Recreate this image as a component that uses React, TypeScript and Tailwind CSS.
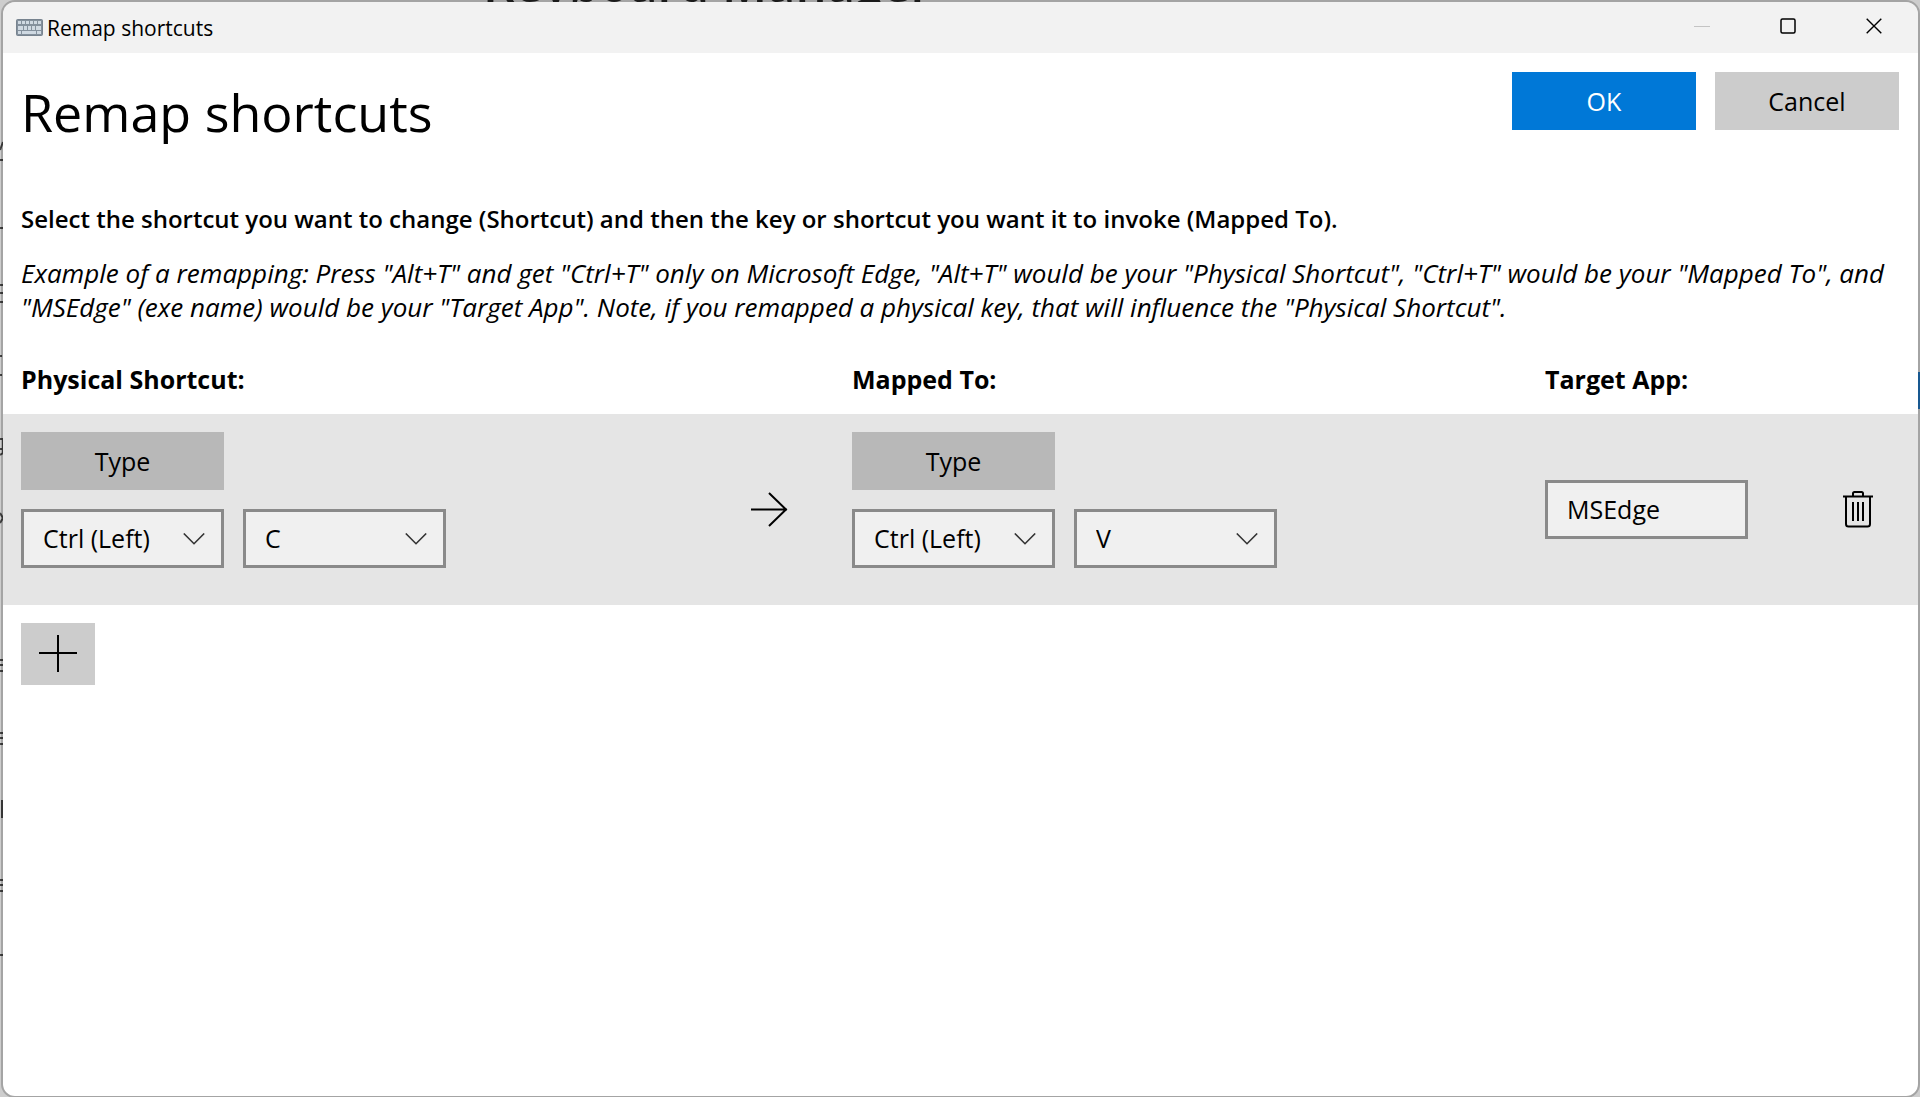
import { useState } from "react";
import type { ReactNode } from "react";

const keyOptions = ["Ctrl (Left)", "Alt (Left)", "Shift (Left)", "Win (Left)", "C", "V", "T"];

const controlBorder = "h-[59px] border-[3px] border-[#8a8a8a] bg-[#f0f0f0] pb-0.5";
const columns = "grid grid-cols-[730fr_101fr_693fr_203fr_152fr] px-[18px]";

// The settings window that peeks out behind this one
function Backdrop() {
  return (
    <div aria-hidden className="absolute inset-0 overflow-hidden">
      <div className="flex h-2 items-end pl-[483px] text-[49px] leading-none font-semibold text-[#222]">
        Keyboard Manager
      </div>
      <svg
        className="absolute top-0 left-0"
        width="3"
        height="1000"
        viewBox="0 0 3 1000"
        fill="none"
        stroke="#444"
        strokeWidth="2"
      >
        <path d="M0 150 3 142M0 160h3M0 228h3M0 285h3M0 293h3M0 302h3M0 356h2M0 375h2" />
        <path d="M0 439h3v14l-3 2M0 449h3M0 513l3 5-3 5M0 660h3M0 665h3M0 671h3M0 733h3M0 738h3M0 744h3" />
        <path d="M2 800v18M0 880h3M0 885h3M0 891h3M0 955h3" />
      </svg>
      <div className="absolute top-[372px] right-0 h-[37px] w-[2px] bg-[#1f6fb5]" />
    </div>
  );
}

function KeyboardIcon() {
  return (
    <svg width="27" height="18" viewBox="0 0 27 18" aria-hidden>
      <rect x="0.5" y="0.5" width="26" height="16" rx="1" fill="#84919d" stroke="#77838f" />
      <g fill="#cfd9e2">
        <path d="M2 2h3v3H2zM6 2h3v3H6zM10 2h3v3h-3zM14 2h3v3h-3zM18 2h3v3h-3zM22 2h3v3h-3z" />
        <path d="M2 7h5v4H2zM8 7h3v4H8zM12 7h3v4h-3zM16 7h3v4h-3zM20 7h5v4h-5z" />
        <path d="M2 12h3v3H2zM6 12h14v3H6zM21 12h4v3h-4z" />
      </g>
    </svg>
  );
}

function KeySelect({ label, initial }: { label: string; initial: string }) {
  const [value, setValue] = useState(initial);

  return (
    <div className="relative w-[203px]">
      <select
        aria-label={label}
        value={value}
        onChange={(event) => setValue(event.target.value)}
        className={`${controlBorder} w-full appearance-none pr-12 pl-[19px] text-[25px] leading-8`}
      >
        {keyOptions.map((key) => (
          <option key={key}>{key}</option>
        ))}
      </select>
      <svg
        className="pointer-events-none absolute top-6 right-[19px]"
        width="22"
        height="13"
        viewBox="0 0 22 13"
        fill="none"
        stroke="#333"
        strokeWidth="1.6"
        aria-hidden
      >
        <path d="M.8 .5 11 10.700 21.200 .5" />
      </svg>
    </div>
  );
}

function ShortcutEditor({ name, keys }: { name: string; keys: string[] }) {
  return (
    <div className="flex flex-col items-start gap-[19px] pt-[18px] pb-[37px]">
      <button type="button" className="h-[58px] w-[203px] bg-[#b8b8b8] text-[25px] leading-8">
        Type
      </button>
      <div className="flex gap-[19px]">
        {keys.map((key, index) => (
          <KeySelect key={index} label={`${name} key ${index + 1}`} initial={key} />
        ))}
      </div>
    </div>
  );
}

function CaptionButton({ label, children }: { label: string; children: ReactNode }) {
  return (
    <button type="button" aria-label={label} className="flex h-12 w-[86px] items-center justify-center">
      <svg width="16" height="16" viewBox="0 0 16 16" fill="none" stroke="currentColor" aria-hidden>
        {children}
      </svg>
    </button>
  );
}

export default function App() {
  const [targetApp, setTargetApp] = useState("MSEdge");

  return (
    <div className="relative flex min-h-screen flex-col overflow-hidden bg-[#cdcdcd] pt-[2px] pr-[2px] pb-px pl-[3px] font-['Open_Sans','Noto_Sans',sans-serif] text-black">
      <Backdrop />
      <div className="relative flex flex-1 flex-col overflow-hidden rounded-xl bg-white outline-2 outline-black/20">
        <header className="flex h-[51px] items-start justify-between bg-[#f2f2f2]">
          <div className="flex h-full items-center gap-1 pl-[13px]">
            <KeyboardIcon />
            <span className="text-[21px] leading-7">Remap shortcuts</span>
          </div>
          <div className="flex pr-px">
            <CaptionButton label="Minimize">
              <path d="M0 8.500h16" stroke="#c4c4c4" />
            </CaptionButton>
            <CaptionButton label="Maximize">
              <rect x="1" y="1" width="14" height="14" rx="1.5" strokeWidth="1.5" />
            </CaptionButton>
            <CaptionButton label="Close">
              <path d="m.7.7 14.600 14.600M15.300.7.7 15.300" strokeWidth="1.4" />
            </CaptionButton>
          </div>
        </header>

        <main className="flex flex-col">
          <div className="flex items-start justify-between pt-[19px] pr-[19px] pl-[18px]">
            <h1 className="text-[52px] leading-[80px]">Remap shortcuts</h1>
            <div className="flex gap-[19px]">
              <button type="button" className="h-[58px] w-[184px] bg-[#0078d7] text-[25px] leading-8 text-white">
                OK
              </button>
              <button type="button" className="h-[58px] w-[184px] bg-[#ccc] text-[25px] leading-8">
                Cancel
              </button>
            </div>
          </div>

          <div className="px-[18px] pt-[50px]">
            <p className="text-[24px] leading-[34px] font-semibold">
              Select the shortcut you want to change (Shortcut) and then the key or shortcut you want it to invoke
              (Mapped To).
            </p>
            <p className="pt-5 text-[26px] leading-[34px] italic">
              Example of a remapping: Press "Alt+T" and get "Ctrl+T" only on Microsoft Edge, "Alt+T" would be your
              "Physical Shortcut", "Ctrl+T" would be your "Mapped To", and "MSEdge" (exe name) would be your "Target
              App". Note, if you remapped a physical key, that will influence the "Physical Shortcut".
            </p>
          </div>

          <div className={`${columns} pt-[38px] pb-[18px] text-[25px] leading-[34px] font-bold`}>
            <h2 className="col-span-2">Physical Shortcut:</h2>
            <h2>Mapped To:</h2>
            <h2 className="col-span-2">Target App:</h2>
          </div>

          <div className={`${columns} items-center bg-[#e5e5e5]`}>
            <ShortcutEditor name="Physical shortcut" keys={["Ctrl (Left)", "C"]} />
            <svg width="38" height="36" viewBox="0 0 38 36" fill="none" stroke="currentColor" strokeWidth="2" aria-hidden>
              <path d="M0 17.500h36M18 1 35 17.500 18 34" />
            </svg>
            <ShortcutEditor name="Mapped to" keys={["Ctrl (Left)", "V"]} />
            <input
              aria-label="Target app"
              value={targetApp}
              onChange={(event) => setTargetApp(event.target.value)}
              className={`${controlBorder} w-[203px] px-[19px] text-[25px] leading-8`}
            />
            <button type="button" aria-label="Delete" className="mr-[11px] justify-self-end p-4">
              <svg width="30" height="38" viewBox="0 0 30 38" fill="none" stroke="currentColor" strokeWidth="2" aria-hidden>
                <path d="M0 5.500h30M10 5V2.500Q10 1 11.500 1h7Q20 1 20 2.500V5M3 5.500V33Q3 35.500 5.500 35.500h19Q27 35.500 27 33V5.500" />
                <path d="M10 11v19M15 11v19M20 11v19" />
              </svg>
            </button>
          </div>

          <div className="px-[18px] pt-[18px]">
            <button type="button" aria-label="Add shortcut" className="flex h-[62px] w-[74px] items-center justify-center bg-[#ccc]">
              <svg width="38" height="38" viewBox="0 0 38 38" stroke="currentColor" strokeWidth="2" aria-hidden>
                <path d="M0 18h38M19 0v37" />
              </svg>
            </button>
          </div>
        </main>
      </div>
    </div>
  );
}
